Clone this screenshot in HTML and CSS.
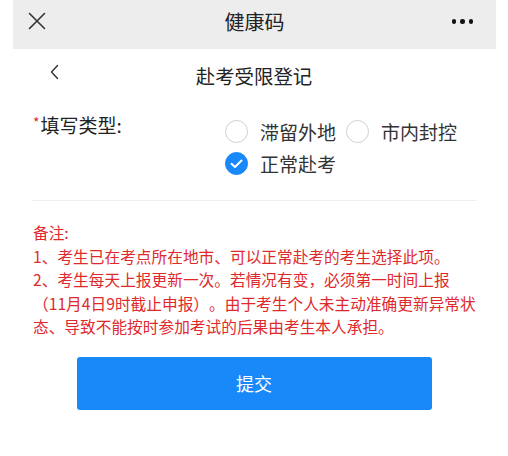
FILE: index.html
```html
<!DOCTYPE html>
<html lang="zh-CN">
<head>
    <meta charset="utf-8">
    <link rel="stylesheet" href="styles.css">
</head>
<body>
    <div class="topbar">
        <div class="topbar-left">
            <svg class="icon-close" width="18" height="18" viewBox="0 0 18 18">
                <path d="M1.5 1.5 L16.5 16.5 M16.5 1.5 L1.5 16.5" stroke="#333" stroke-width="1.6" fill="none" stroke-linecap="round"/>
            </svg>
        </div>
        <div class="topbar-title">健康码</div>
        <div class="topbar-right">
            <span class="dot"></span><span class="dot"></span><span class="dot"></span>
        </div>
    </div>

    <div class="navbar">
        <div class="nav-left">
            <svg class="icon-back" width="9" height="16" viewBox="0 0 9 16">
                <path d="M7.5 1.5 L1.5 8 L7.5 14.5" stroke="#333" stroke-width="1.4" fill="none" stroke-linecap="round" stroke-linejoin="round"/>
            </svg>
        </div>
        <div class="nav-title">赴考受限登记</div>
        <div class="nav-right"></div>
    </div>

    <div class="form-row">
        <div class="form-label"><span class="required">*</span>填写类型:</div>
        <div class="radio-group">
            <div class="radio">
                <span class="radio-icon"></span>
                <span class="radio-text">滞留外地</span>
            </div>
            <div class="radio">
                <span class="radio-icon"></span>
                <span class="radio-text">市内封控</span>
            </div>
            <div class="radio checked">
                <span class="radio-icon">
                    <svg width="23" height="23" viewBox="0 0 23 23">
                        <path d="M6.5 11.8 L10 15 L16.5 8.5" stroke="#fff" stroke-width="2" fill="none" stroke-linecap="round" stroke-linejoin="round"/>
                    </svg>
                </span>
                <span class="radio-text">正常赴考</span>
            </div>
        </div>
    </div>

    <div class="divider"></div>

    <div class="notes">
        <p>备注:</p>
        <p>1、考生已在考点所在地市、可以正常赴考的考生选择此项。</p>
        <p>2、考生每天上报更新一次。若情况有变，必须第一时间上报（11月4日9时截止申报）。由于考生个人未主动准确更新异常状态、导致不能按时参加考试的后果由考生本人承担。</p>
    </div>

    <div class="actions">
        <button class="submit-btn">提交</button>
    </div>
</body>
</html>
```

FILE: styles.css
```css
body {
    margin: 0;
    background: #fff;
    font-family: "Noto Sans CJK SC", "Noto Sans", sans-serif;
    color: #333;
}

.topbar {
    margin: 0 12px 0 13px;
    height: 49px;
    background: #ededed;
    display: grid;
    grid-template-columns: 60px 1fr 60px;
    align-items: center;
}

.topbar-left {
    padding-left: 15px;
    display: flex;
    align-items: center;
}

.topbar-title {
    text-align: center;
    font-size: 20px;
    color: #222;
    line-height: 1;
    padding-bottom: 5px;
}

.topbar-right {
    display: flex;
    justify-content: flex-end;
    gap: 4px;
    padding-right: 23px;
    padding-bottom: 6px;
}

.dot {
    width: 4.5px;
    height: 4.5px;
    border-radius: 50%;
    background: #111;
}

.icon-close {
    margin-top: -7px;
}

.navbar {
    height: 54px;
    display: grid;
    grid-template-columns: 80px 1fr 80px;
    align-items: center;
}

.nav-left {
    padding-left: 50px;
    display: flex;
    align-items: center;
    margin-top: -8px;
}

.nav-title {
    text-align: center;
    font-size: 19.4px;
    line-height: 1;
    color: #222;
}

.form-row {
    display: grid;
    grid-template-columns: 192px 1fr;
    padding: 12px 31px 21px 33px;
}

.form-label {
    font-size: 19px;
    line-height: 20px;
    color: #222;
}

.required {
    color: #e02a2a;
    font-size: 14px;
    vertical-align: top;
    line-height: 14px;
    margin-right: 1px;
}

.radio-group {
    display: flex;
    flex-wrap: wrap;
}

.radio {
    display: flex;
    align-items: center;
    gap: 12px;
    height: 32px;
    margin-right: 10px;
}

.radio-icon {
    width: 23px;
    height: 23px;
    box-sizing: border-box;
    border-radius: 50%;
    border: 1px solid #cfd0d3;
    display: flex;
}

.radio.checked .radio-icon {
    background: #1989fa;
    border-color: #1989fa;
}

.radio.checked .radio-icon svg {
    margin: -1px;
}

.radio-text {
    font-size: 19px;
    color: #333;
}

.divider {
    margin: 0 31px 0 32px;
    height: 1px;
    background: #efefef;
}

.notes {
    width: 444px;
    margin: 20px 0 0 33px;
    color: #df2a2d;
    font-size: 15.7px;
    line-height: 23.5px;
    text-spacing-trim: space-all;
}

.notes p {
    margin: 0;
}

.actions {
    display: flex;
    justify-content: center;
    padding-top: 18px;
}

.submit-btn {
    width: 355px;
    height: 53px;
    border: none;
    border-radius: 3px;
    background: #1989fa;
    color: #fff;
    font-family: inherit;
    font-size: 18px;
}
```
